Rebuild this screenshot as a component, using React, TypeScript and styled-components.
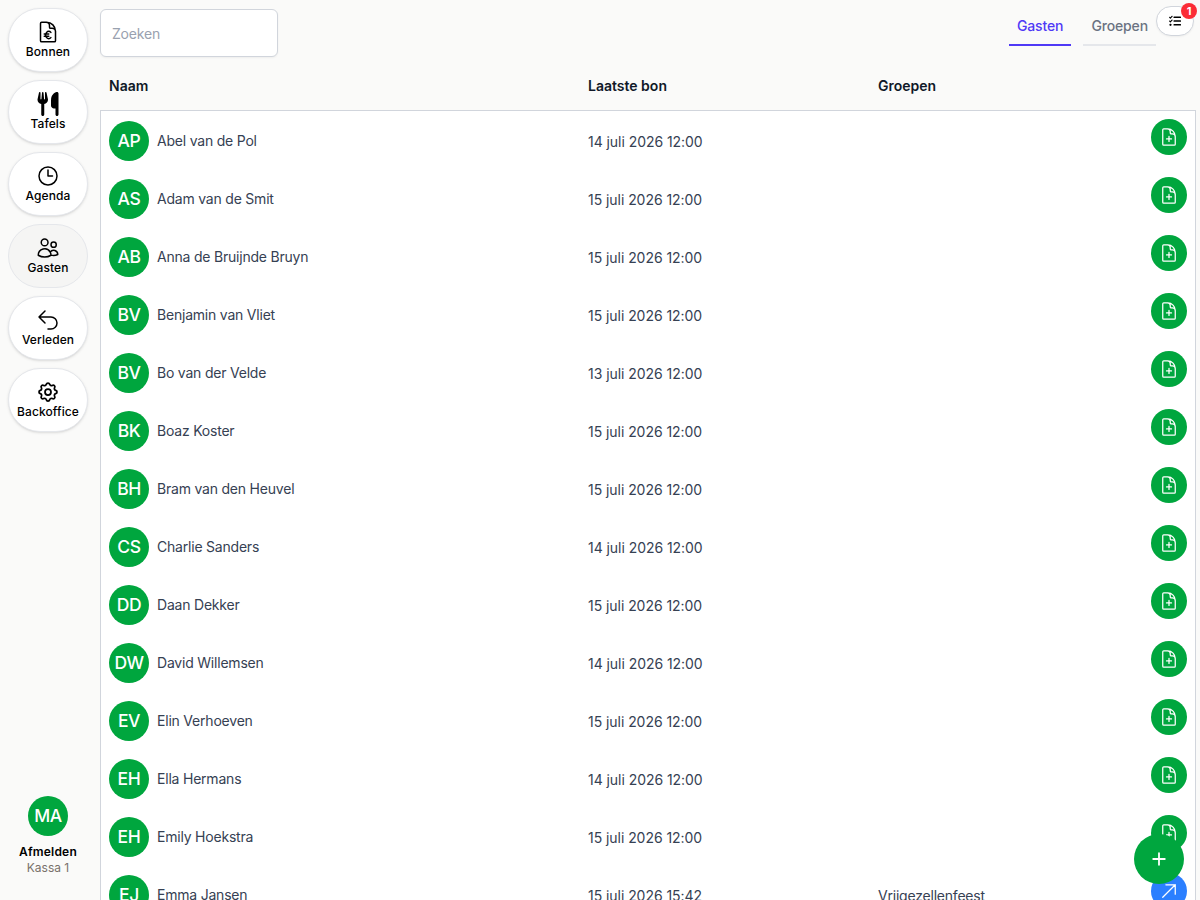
import React from "react";
import styled, { createGlobalStyle } from "styled-components";
import { FaUtensils } from "react-icons/fa6";
import { FaTasks } from "react-icons/fa";
import { HiOutlineCog } from "react-icons/hi";
import {
  HiOutlineClock,
  HiOutlineUsers,
  HiOutlineArrowUturnLeft,
  HiOutlineDocumentCurrencyEuro,
  HiOutlineDocumentPlus,
  HiOutlineArrowUpRight,
} from "react-icons/hi2";

const GlobalStyle = createGlobalStyle`
  *, *::before, *::after { box-sizing: border-box; }
  body {
    margin: 0;
    background: #fafaf9;
    color: #000;
    font-family: Inter, "Liberation Sans", sans-serif;
    font-size: 14px;
    line-height: 20px;
    overflow: hidden;
  }
  button, input { font: inherit; }
  svg { display: block; flex: none; }
`;

const Page = styled.div`
  display: flex;
  height: 900px;
  overflow: hidden;
`;

const Sidebar = styled.nav`
  display: flex;
  flex-direction: column;
  gap: 8px;
  width: 100px;
  padding: 8px 12px 24px 8px;
`;

const NavButton = styled.button<{ $active?: boolean }>`
  display: flex;
  flex-direction: column;
  align-items: center;
  justify-content: center;
  width: 80px;
  height: 64px;
  padding: 0;
  border: 1px solid #e5e7eb;
  border-radius: 32px;
  background: ${(p) => (p.$active ? "#f5f5f4" : "#fff")};
  box-shadow: ${(p) => (p.$active ? "none" : "0 1px 3px rgba(0,0,0,.1), 0 1px 2px -1px rgba(0,0,0,.1)")};
  color: #000;
  font-size: 12px;
  font-weight: 500;
  line-height: 16px;
  letter-spacing: 0.08px;
`;

const GearIcon = styled(HiOutlineCog)`
  path { stroke-width: 1.75; }
`;

const Account = styled.div`
  display: flex;
  flex-direction: column;
  align-items: center;
  width: 80px;
  margin-top: auto;
  font-size: 12px;
  line-height: 16px;
`;

const AccountAction = styled.span`
  margin-top: 8px;
  font-weight: 600;
  letter-spacing: 0.2px;
`;

const Register = styled.span`
  color: #79716b;
`;

const Avatar = styled.span`
  display: flex;
  align-items: center;
  justify-content: center;
  flex: none;
  width: 40px;
  height: 40px;
  border-radius: 50%;
  background: #00a63e;
  color: #fff;
  font-size: 17.5px;
  font-weight: 500;
  line-height: 28px;
  letter-spacing: -0.4px;
`;

const Main = styled.main`
  display: flex;
  flex-direction: column;
  width: 1096px;
`;

const Toolbar = styled.header`
  display: flex;
  align-items: flex-start;
  justify-content: space-between;
  height: 62px;
`;

const Search = styled.input`
  width: 178px;
  height: 48px;
  margin-top: 9px;
  padding: 1px 11px 0;
  border: 1px solid #d1d5dc;
  border-radius: 6px;
  background: #fff;
  box-shadow: 0 1px 2px rgba(0, 0, 0, 0.05);
  letter-spacing: -0.2px;
  &::placeholder { color: #99a1af; opacity: 1; }
`;

const ToolbarEnd = styled.div`
  display: flex;
  padding-right: 2px;
`;

const Tabs = styled.div`
  display: flex;
  gap: 12px;
`;

const Tab = styled.button<{ $active?: boolean }>`
  height: 46px;
  padding: 8px 8px 0;
  border: 0;
  border-bottom: 2px solid ${(p) => (p.$active ? "#4f39f6" : "#e5e7eb")};
  background: none;
  color: ${(p) => (p.$active ? "#4f39f6" : "#6a7282")};
  font-weight: 500;
  letter-spacing: -0.14px;
`;

const TasksButton = styled.button`
  position: relative;
  display: flex;
  align-items: center;
  justify-content: center;
  width: 38px;
  height: 30px;
  margin-top: 6px;
  padding: 0;
  border: 1px solid #d1d5dc;
  border-radius: 15px;
  background: #fff;
  box-shadow: 0 1px 2px rgba(0, 0, 0, 0.05);
  color: #000;
`;

const Badge = styled.span`
  position: absolute;
  top: -4px;
  right: -4px;
  width: 16px;
  height: 16px;
  border-radius: 50%;
  background: #fb2c36;
  color: #fff;
  font-size: 11px;
  font-weight: 700;
  line-height: 17px;
  text-align: center;
`;

const HeaderRow = styled.div`
  display: grid;
  grid-template-columns: 479px 290px 1fr;
  align-items: center;
  height: 48px;
  padding: 0 9px;
  color: #101828;
  font-weight: 600;
`;

const List = styled.div`
  flex: 1;
  overflow: hidden;
  border: 1px solid #d1d5dc;
  border-bottom: 0;
  background: #fff;
`;

const Row = styled.div`
  display: grid;
  grid-template-columns: 479px 290px 1fr 36px;
  height: 58px;
  padding: 8px 8px 0;
  color: #364153;
  letter-spacing: -0.21px;
`;

const Guest = styled.div`
  display: flex;
  align-items: center;
  gap: 8px;
  height: 40px;
  margin-top: 2px;
`;

const Cell = styled.span`
  padding-top: 13px;
`;

const DateCell = styled(Cell)`
  letter-spacing: -0.05px;
`;

const RowAction = styled.button<{ $open?: boolean }>`
  display: flex;
  align-items: center;
  justify-content: center;
  width: 36px;
  height: 36px;
  padding: 0;
  border: 0;
  border-radius: 50%;
  background: ${(p) => (p.$open ? "#2b7fff" : "#00a63e")};
  color: #fff;
`;

const AddButton = styled.button`
  position: fixed;
  right: 16px;
  bottom: 16px;
  display: flex;
  align-items: center;
  justify-content: center;
  width: 50px;
  height: 50px;
  padding: 0;
  border: 0;
  border-radius: 50%;
  background: #00a63e;
  color: #fff;
`;

const PlusIcon = () => (
  <svg width="20" height="20" viewBox="0 0 20 20" fill="none" stroke="currentColor" strokeWidth="1.8" strokeLinecap="round">
    <path d="M10 4.2v11.6M4.2 10h11.6" />
  </svg>
);

const navItems = [
  { label: "Bonnen", icon: <HiOutlineDocumentCurrencyEuro size={24} /> },
  { label: "Tafels", icon: <FaUtensils size={24} /> },
  { label: "Agenda", icon: <HiOutlineClock size={24} /> },
  { label: "Gasten", icon: <HiOutlineUsers size={24} />, active: true },
  { label: "Verleden", icon: <HiOutlineArrowUturnLeft size={24} /> },
  { label: "Backoffice", icon: <GearIcon size={24} /> },
];

const guests = [
  { initials: "AP", name: "Abel van de Pol", date: "14 juli 2026 12:00" },
  { initials: "AS", name: "Adam van de Smit", date: "15 juli 2026 12:00" },
  { initials: "AB", name: "Anna de Bruijnde Bruyn", date: "15 juli 2026 12:00" },
  { initials: "BV", name: "Benjamin van Vliet", date: "15 juli 2026 12:00" },
  { initials: "BV", name: "Bo van der Velde", date: "13 juli 2026 12:00" },
  { initials: "BK", name: "Boaz Koster", date: "15 juli 2026 12:00" },
  { initials: "BH", name: "Bram van den Heuvel", date: "15 juli 2026 12:00" },
  { initials: "CS", name: "Charlie Sanders", date: "14 juli 2026 12:00" },
  { initials: "DD", name: "Daan Dekker", date: "15 juli 2026 12:00" },
  { initials: "DW", name: "David Willemsen", date: "14 juli 2026 12:00" },
  { initials: "EV", name: "Elin Verhoeven", date: "15 juli 2026 12:00" },
  { initials: "EH", name: "Ella Hermans", date: "14 juli 2026 12:00" },
  { initials: "EH", name: "Emily Hoekstra", date: "15 juli 2026 12:00" },
  { initials: "EJ", name: "Emma Jansen", date: "15 juli 2026 15:42", group: "Vrijgezellenfeest" },
];

export default function App() {
  return (
    <>
      <GlobalStyle />
      <Page>
        <Sidebar>
          {navItems.map((item) => (
            <NavButton key={item.label} $active={item.active}>
              {item.icon}
              {item.label}
            </NavButton>
          ))}
          <Account>
            <Avatar>MA</Avatar>
            <AccountAction>Afmelden</AccountAction>
            <Register>Kassa 1</Register>
          </Account>
        </Sidebar>
        <Main>
          <Toolbar>
            <Search placeholder="Zoeken" />
            <ToolbarEnd>
              <Tabs>
                <Tab $active>Gasten</Tab>
                <Tab>Groepen</Tab>
              </Tabs>
              <TasksButton>
                <FaTasks size={12} />
                <Badge>1</Badge>
              </TasksButton>
            </ToolbarEnd>
          </Toolbar>
          <HeaderRow>
            <span>Naam</span>
            <span>Laatste bon</span>
            <span>Groepen</span>
          </HeaderRow>
          <List>
            {guests.map((guest) => (
              <Row key={guest.name}>
                <Guest>
                  <Avatar>{guest.initials}</Avatar>
                  {guest.name}
                </Guest>
                <DateCell>{guest.date}</DateCell>
                <Cell>{guest.group}</Cell>
                <RowAction $open={Boolean(guest.group)}>
                  {guest.group ? <HiOutlineArrowUpRight size={20} /> : <HiOutlineDocumentPlus size={20} />}
                </RowAction>
              </Row>
            ))}
          </List>
        </Main>
        <AddButton>
          <PlusIcon />
        </AddButton>
      </Page>
    </>
  );
}
